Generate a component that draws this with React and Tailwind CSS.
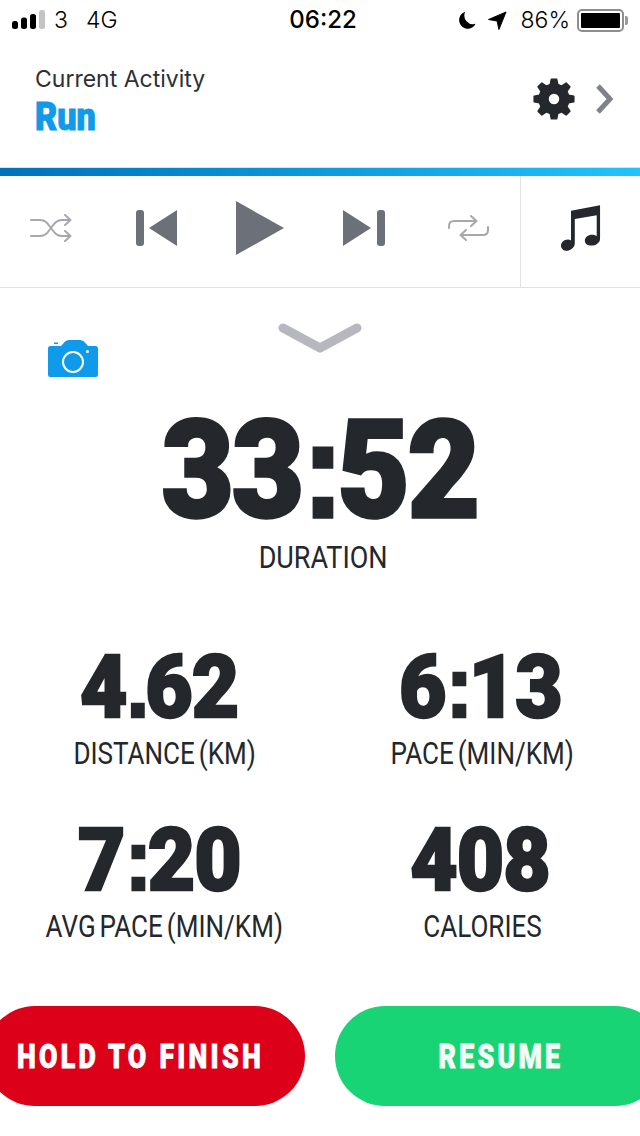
const NUM = "font-['Roboto',sans-serif] font-black text-[#24272b] leading-[0.78]";
const LABEL = "font-['Roboto',sans-serif] text-[#24272b] leading-none font-normal [word-spacing:-3px]";

function gearPath(cx, cy, teeth, outer, inner) {
  let d = "";
  const step = (Math.PI * 2) / teeth;
  for (let i = 0; i < teeth; i++) {
    const a = i * step - Math.PI / 2;
    const pts = [
      [inner, a - step * 0.32],
      [outer, a - step * 0.17],
      [outer, a + step * 0.17],
      [inner, a + step * 0.32],
    ];
    pts.forEach(([r, t], j) => {
      const x = (cx + r * Math.cos(t)).toFixed(2);
      const y = (cy + r * Math.sin(t)).toFixed(2);
      d += (i === 0 && j === 0 ? "M" : "L") + x + " " + y + " ";
    });
  }
  return d + "Z";
}

function Digits({ value }) {
  return value.split(/([:.])/).map((part, i) =>
    part === ":" || part === "." ? (
      <span key={i} className="font-['Liberation_Sans',sans-serif] font-bold tracking-[-0.05em]">{part}</span>
    ) : (
      <span key={i}>{part}</span>
    )
  );
}

function Metric({ value, label, right }) {
  return (
    <div className="flex flex-col items-center">
      <div className={`flex h-[76px] w-full items-center justify-center ${right ? "pr-[2px]" : "pr-[8px]"}`}>
        <span className={`${NUM} inline-block scale-x-[0.93] whitespace-nowrap text-[88px] tracking-[-1px] [-webkit-text-stroke:2.5px_#24272b]`}><Digits value={value} /></span>
      </div>
      <div className="mt-[13px] flex h-[30px] items-center justify-center pl-[3px]">
        <span className={`${LABEL} inline-block scale-x-[0.84] whitespace-nowrap text-[31px]`}>{label}</span>
      </div>
    </div>
  );
}

export default function App() {
  return (
    <div className="flex h-[1136px] w-[640px] flex-col overflow-hidden bg-white">
      {/* status bar */}
      <div className="flex h-[40px] items-center justify-between text-[24px] text-black">
        <div className="flex w-[223px] items-center pl-[12px]">
          <svg width="33" height="20" viewBox="0 0 33 20" className="shrink-0">
            <rect x="0" y="11" width="6" height="8" rx="2.5" fill="#000" />
            <rect x="9" y="7.5" width="6" height="11.5" rx="2.5" fill="#000" />
            <rect x="18" y="4" width="6" height="15" rx="2.5" fill="#000" />
            <rect x="27" y="0" width="6" height="19" rx="2.5" fill="#c4c4c4" />
          </svg>
          <span className="ml-[9px] font-['Inter',sans-serif] text-[23px] font-light">3</span>
          <span className="ml-[18px] font-['Inter',sans-serif] text-[23px] font-light">4G</span>
        </div>
        <span className="font-['Inter',sans-serif] text-[24px] font-medium">06:22</span>
        <div className="flex w-[217px] items-center justify-end pr-[12px]">
          <svg width="20" height="21" viewBox="0 0 22 22" className="shrink-0">
            <path d="M9 1.5 A9.5 9.5 0 1 0 20.5 14.5 A9.5 9.5 0 0 1 9 1.5 Z" fill="#000" />
          </svg>
          <svg width="19" height="19" viewBox="0 0 20 20" className="ml-[11px] shrink-0">
            <path d="M19 1 L11.5 19.5 L9.5 10.5 L0.5 9 Z" fill="#000" strokeLinejoin="round" stroke="#000" strokeWidth="1" />
          </svg>
          <span className="ml-[14px] font-['Inter',sans-serif] text-[23px] font-light">86%</span>
          <div className="ml-[7px] flex h-[23px] w-[47px] items-center rounded-[5px] border-2 border-[#8e8e8e] p-[2px]">
            <div className="h-full w-full rounded-[1px] bg-black" />
          </div>
          <div className="ml-[1px] h-[9px] w-[3px] rounded-r-[2px] bg-[#9a9a9a]" />
        </div>
      </div>

      {/* header */}
      <div className="flex h-[127px] items-start justify-between">
        <div className="pl-[35px] pt-[25px]">
          <div className="font-['Inter',sans-serif] text-[23px] leading-[28px] text-[#2d3034]">Current Activity</div>
          <div className="mt-[4px] origin-left scale-x-[0.9] font-['Roboto',sans-serif] text-[38px] font-black leading-[40px] text-[#0f9aea] [-webkit-text-stroke:1px_#0f9aea]">Run</div>
        </div>
        <div className="flex items-center pr-[24px] pt-[37px]">
          <svg width="44" height="44" viewBox="0 0 44 44">
            <path fillRule="evenodd" d={gearPath(22, 22, 8, 20, 15) + " M22 16 A6 6 0 1 0 22 28 A6 6 0 1 0 22 16 Z"} fill="#24272b" stroke="#24272b" strokeWidth="1.5" strokeLinejoin="round" />
          </svg>
          <svg width="22" height="32" viewBox="0 0 22 32" className="ml-[18px]">
            <path d="M4 3 L16 16 L4 29" fill="none" stroke="#7f828b" strokeWidth="5" strokeLinejoin="miter" />
          </svg>
        </div>
      </div>

      {/* gradient bar */}
      <div className="h-[9px] border-t border-[#c9e6f5] bg-gradient-to-r from-[#0071bb] to-[#21c3fb]" />

      {/* controls */}
      <div className="flex h-[112px] border-b-[1.5px] border-[#e2e2e4]">
        <div className="flex w-[520px] items-center pb-[7px]">
          <div className="flex w-[102px] justify-center">
            <svg width="42" height="28" viewBox="0 0 42 28">
              <g fill="none" stroke="#a6a7af" strokeWidth="2" strokeLinecap="round" strokeLinejoin="round">
                <path d="M1 6 H10 C16 6 18 10 21 14 C24 18 26 22 32 22 H40" />
                <path d="M1 22 H10 C16 22 18 18 21 14 C24 10 26 6 32 6 H40" />
                <path d="M35 1 L40.5 6 L35 11" />
                <path d="M35 17 L40.5 22 L35 27" />
              </g>
            </svg>
          </div>
          <div className="ml-[34px] flex items-center">
            <div className="h-[36px] w-[8px] rounded-[3px] bg-[#6c7079]" />
            <svg width="29" height="36" viewBox="0 0 29 36" className="ml-[5px]">
              <path d="M0 18 L28 0 V36 Z" fill="#6c7079" />
            </svg>
          </div>
          <svg width="48" height="54" viewBox="0 0 48 54" className="ml-[58px]">
            <path d="M0 0 L48 27 L0 54 Z" fill="#6c7079" />
          </svg>
          <div className="ml-[59px] flex items-center">
            <svg width="29" height="36" viewBox="0 0 29 36">
              <path d="M0 0 L28 18 L0 36 Z" fill="#6c7079" />
            </svg>
            <div className="ml-[5px] h-[36px] w-[8px] rounded-[3px] bg-[#6c7079]" />
          </div>
          <svg width="42" height="28" viewBox="0 0 42 28" className="ml-[63px]">
            <g fill="none" stroke="#a6a7af" strokeWidth="2" strokeLinecap="round" strokeLinejoin="round">
              <path d="M1 14 V12 C1 8 3 7 6 7 H28" />
              <path d="M23 2 L28.5 7 L23 12" />
              <path d="M40 13 V16 C40 19 38 21 35 21 H13" />
              <path d="M18 16 L12.5 21 L18 26" />
            </g>
          </svg>
        </div>
        <div className="flex flex-1 items-center justify-center border-l-[1.5px] border-[#e2e2e4] pb-[7px]">
          <svg width="40" height="48" viewBox="0 0 42 48">
            <path d="M10.5 6 L41 0 V35 C41 40 36 42.5 32 42.5 C27.5 42.5 25 40 25 37 C25 33.5 29 31 32 31 C34 31 36 31.5 37.5 32.5 V10.5 L14.5 14.5 V40 C14.5 45 9 48 6 48 C2.5 48 0 46 0 42.5 C0 39 3.5 36 7 36 C8 36 9.5 36.5 10.5 37 Z" fill="#24272b" />
          </svg>
        </div>
      </div>

      {/* content */}
      <div className="flex flex-1 flex-col">
        <div className="relative flex h-[126px] justify-center pt-[34px]">
          <svg width="84" height="34" viewBox="0 0 84 34">
            <path d="M5 6 L42 26 L79 6" fill="none" stroke="#b6b7bf" strokeWidth="9" strokeLinecap="round" strokeLinejoin="round" />
          </svg>
          <svg width="50" height="38" viewBox="0 0 50 38" className="absolute left-[48px] top-[51px]">
            <path d="M2 7 H13 L17 2.5 Q18.5 1 21 1 H32 Q34.5 1 36 2.5 L40 7 H47.5 Q50 7 50 9.5 V35.5 Q50 38 47.5 38 H2.5 Q0 38 0 35.5 V9.5 Q0 7 2 7 Z" fill="#0f9aea" />
            <circle cx="25" cy="23" r="10" fill="none" stroke="#fff" strokeWidth="2" />
            <circle cx="39.5" cy="12.5" r="1.5" fill="#fff" />
            <rect x="6" y="3.5" width="4" height="1.5" fill="#0f9aea" />
          </svg>
        </div>

        <div className="flex flex-col items-center">
          <div className="flex h-[114px] w-full items-center justify-center">
            <span className={`${NUM} inline-block scale-x-[0.915] whitespace-nowrap text-[136px] tracking-[-2px] [-webkit-text-stroke:3.5px_#24272b]`}><Digits value="33:52" /></span>
          </div>
          <div className="mt-[14px] flex h-[30px] items-center justify-center pl-[6px]">
            <span className={`${LABEL} inline-block scale-x-[0.87] text-[31px]`}>DURATION</span>
          </div>
        </div>

        <div className="mt-[77px] grid grid-cols-2 gap-y-[54px] pl-[4px]">
          <Metric value="4.62" label="DISTANCE (KM)" />
          <Metric value="6:13" label="PACE (MIN/KM)" right />
          <Metric value="7:20" label="AVG PACE (MIN/KM)" />
          <Metric value="408" label="CALORIES" right />
        </div>

        <div className="mt-[65px] flex gap-[30px]">
          <div className="ml-[-15px] flex h-[100px] w-[320px] shrink-0 items-center justify-center rounded-[50px] bg-[#dc0019]">
            <span className="inline-block scale-x-[0.81] whitespace-nowrap pr-[11px] font-['Roboto',sans-serif] text-[33px] font-black leading-none tracking-[4px] text-white [-webkit-text-stroke:0.8px_#ffffff]">HOLD TO FINISH</span>
          </div>
          <div className="flex h-[100px] w-[330px] shrink-0 items-center justify-center rounded-[50px] bg-[#19d474]">
            <span className="inline-block scale-x-[0.81] whitespace-nowrap pl-[1px] font-['Roboto',sans-serif] text-[33px] font-black leading-none tracking-[4px] text-[#f2fbf6] [-webkit-text-stroke:0.8px_#f2fbf6]">RESUME</span>
          </div>
        </div>
      </div>
    </div>
  );
}
